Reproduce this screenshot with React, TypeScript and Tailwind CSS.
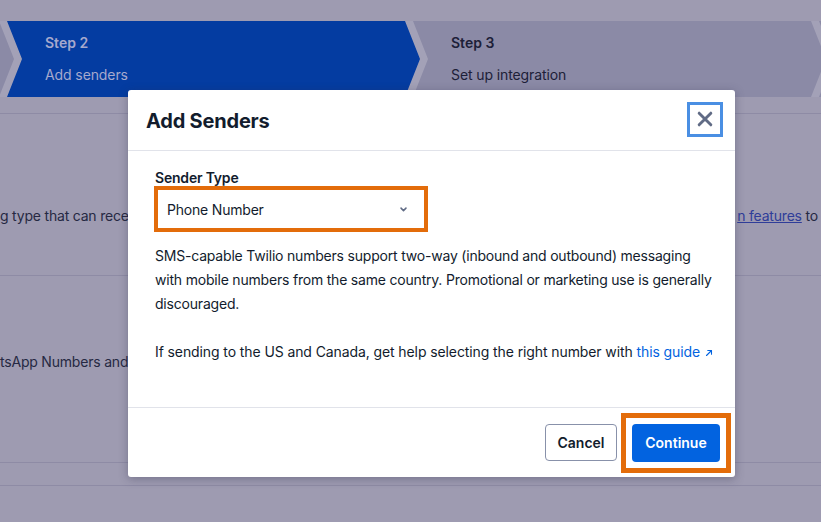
import React from "react";

const steps = [
  { title: "", sub: "", active: false },
  { title: "Step 2", sub: "Add senders", active: true },
  { title: "Step 3", sub: "Set up integration", active: false },
  { title: "", sub: "", active: false },
];

function ChevronDown() {
  return (
    <svg width="11" height="11" viewBox="0 0 20 20" fill="none" className="text-[#606b85]">
      <path d="M5.5 7.5 10 12l4.5-4.5" stroke="currentColor" strokeWidth="2.8" strokeLinecap="round" strokeLinejoin="round" />
    </svg>
  );
}

function CloseIcon() {
  return (
    <svg width="18" height="18" viewBox="0 0 20 20" fill="none" className="text-[#606b85]">
      <path d="M3.5 3.5l13 13M16.5 3.5l-13 13" stroke="currentColor" strokeWidth="3.2" strokeLinecap="round" />
    </svg>
  );
}

function LinkArrow() {
  return (
    <svg width="10" height="10" viewBox="0 0 12 12" fill="none" className="inline-block ml-[4px] mb-[1px]">
      <path d="M3 9l6-6M4.5 3H9v4.5" stroke="currentColor" strokeWidth="1.3" strokeLinecap="round" strokeLinejoin="round" />
    </svg>
  );
}

export default function App() {
  return (
    <div
      className="relative w-[821px] h-[522px] overflow-hidden bg-[#9e9bb1] text-[14px]"
      style={{ fontFamily: "Inter, 'Noto Sans', sans-serif" }}
    >
      {/* Steps bar */}
      <div className="pt-[21px]">
        <div className="flex h-[76px] bg-[#a3a1b7]">
          <div className="flex shrink-0 ml-[-399px]">
            {steps.map((s, i) => (
              <div
                key={i}
                className={
                  "shrink-0 w-[413px] mr-[-7px] h-[76px] pl-[38px] flex flex-col justify-center gap-[14px] [clip-path:polygon(0_0,calc(100%-15px)_0,100%_50%,calc(100%-15px)_100%,0_100%,15px_50%)] " +
                  (s.active ? "bg-[#043ca1] text-[#a6a9cd]" : "bg-[#8b8aa6] text-[#1d2038]")
                }
              >
                {s.title && <span className="font-semibold leading-[18px]">{s.title}</span>}
                {s.sub && <span className="leading-[18px] tracking-[-0.1px]">{s.sub}</span>}
              </div>
            ))}
          </div>
        </div>
      </div>

      {/* Page content under the overlay */}
      <div className="mt-[16px] border-t border-[#8e8ba5] tracking-[-0.2px]">
        <div className="h-[161px] flex items-center justify-between pt-[41px] whitespace-nowrap text-[#262943]">
          <span className="w-[128px] overflow-hidden">g type that can receive</span>
          <span className="pr-[3px]">
            <span className="text-[#2f3d99] underline">n features</span> to
          </span>
        </div>
        <div className="h-[187px] border-t border-[#8e8ba5] flex items-center pb-[15px] whitespace-nowrap text-[#262943]">
          <span className="w-[128px] overflow-hidden">tsApp Numbers and</span>
        </div>
        <div className="h-[23px] border-t border-[#8e8ba5]"></div>
        <div className="border-t border-[#8e8ba5]"></div>
      </div>

      {/* Modal */}
      <div className="absolute left-[128px] top-[90px] w-[607px] h-[387px] bg-white rounded-[3px] shadow-[0_2px_10px_rgba(40,40,70,0.35)] flex flex-col text-[#121c2d]">
        <div className="h-[61px] flex items-center justify-between pl-[18px] pr-[12px] border-b border-[#e1e3ea]">
          <h2 className="text-[20px] font-bold leading-[28px] mt-[1px] tracking-[-0.2px]">Add Senders</h2>
          <button className="w-[36px] h-[35px] border-[3px] border-[#4a8fe3] flex items-center justify-center mt-[-2px]">
            <CloseIcon />
          </button>
        </div>

        <div className="flex-1 pl-[26px] pr-[20px] pt-[18px] border-b border-[#e1e3ea] tracking-[-0.2px]">
          <div className="font-semibold leading-[18px] ml-[1px] mb-[-1px]">Sender Type</div>
          <div className="w-[274px] h-[46px] border-[4px] border-[#e36c0a] bg-white flex items-center justify-between pl-[9px] pr-[15px]">
            <span>Phone Number</span>
            <ChevronDown />
          </div>
          <p className="mt-[12px] leading-[24px] ml-[1px]">
            SMS-capable Twilio numbers support two-way (inbound and outbound) messaging with mobile numbers from the same
            country. Promotional or marketing use is generally discouraged.
          </p>
          <p className="mt-[24px] leading-[24px] ml-[1px] whitespace-nowrap tracking-[-0.1px]">
            If sending to the US and Canada, get help selecting the right number with{" "}
            <span className="text-[#0263e0]">
              this guide
              <LinkArrow />
            </span>
          </p>
        </div>

        <div className="h-[69px] flex items-center justify-end pr-[4px] pt-[0px]">
          <button className="w-[72px] h-[37px] border border-[#8891aa] rounded-[4px] font-semibold text-[#121c2d] mr-[4px]">
            Cancel
          </button>
          <div className="border-[5px] border-[#e36c0a] p-[6px]">
            <button className="w-[88px] h-[38px] bg-[#0263e0] rounded-[4px] font-semibold text-white">Continue</button>
          </div>
        </div>
      </div>
    </div>
  );
}
